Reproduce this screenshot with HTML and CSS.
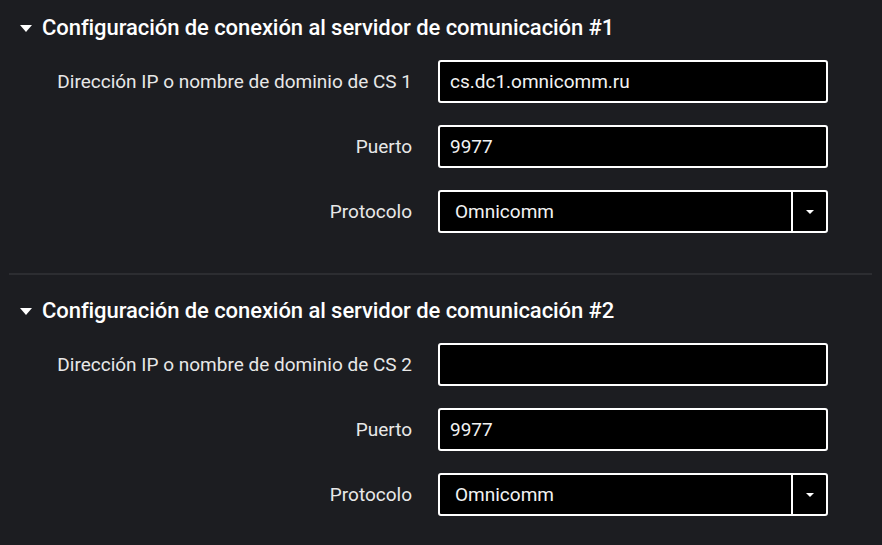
FILE: index.html
```html
<!DOCTYPE html>
<html lang="es">
<head>
<meta charset="utf-8">
<link rel="stylesheet" href="styles.css">
</head>
<body>
<div class="page">
  <section class="group">
    <h2 class="group-title"><span class="caret"></span><span>Configuración de conexión al servidor de comunicación #1</span></h2>
    <div class="form">
      <label class="label">Dirección IP o nombre de dominio de CS 1</label>
      <div class="field"><span class="value">cs.dc1.omnicomm.ru</span></div>
      <label class="label">Puerto</label>
      <div class="field"><span class="value">9977</span></div>
      <label class="label">Protocolo</label>
      <div class="field select"><span class="value">Omnicomm</span><span class="select-btn"><span class="select-arrow"></span></span></div>
    </div>
  </section>
  <hr class="divider">
  <section class="group">
    <h2 class="group-title"><span class="caret"></span><span>Configuración de conexión al servidor de comunicación #2</span></h2>
    <div class="form">
      <label class="label">Dirección IP o nombre de dominio de CS 2</label>
      <div class="field"><span class="value"></span></div>
      <label class="label">Puerto</label>
      <div class="field"><span class="value">9977</span></div>
      <label class="label">Protocolo</label>
      <div class="field select"><span class="value">Omnicomm</span><span class="select-btn"><span class="select-arrow"></span></span></div>
    </div>
  </section>
</div>
</body>
</html>
```
FILE: styles.css
```css
html, body {
  margin: 0;
  padding: 0;
  background: #1c1d21;
}
body {
  font-family: Roboto, "Liberation Sans", sans-serif;
  color: #e6e6e6;
}
.page {
  padding: 16px 10px 0 9px;
}
.group-title {
  margin: 0;
  height: 24px;
  line-height: 24px;
  font-size: 22px;
  font-weight: 500;
  letter-spacing: -0.07px;
  color: #ffffff;
  display: flex;
  align-items: center;
  padding-left: 11px;
}
.caret {
  width: 0;
  height: 0;
  border-left: 6.5px solid transparent;
  border-right: 6.5px solid transparent;
  border-top: 7px solid #ffffff;
  margin-right: 10px;
  margin-top: 1px;
}
.form {
  margin-top: 20px;
  display: grid;
  grid-template-columns: 403px 390px;
  column-gap: 26px;
  row-gap: 22px;
  align-items: center;
}
.label {
  text-align: right;
  font-size: 19px;
  color: #e8e8e8;
}
.field {
  height: 43px;
  box-sizing: border-box;
  border: 2px solid #ffffff;
  border-radius: 3px;
  background: #000000;
  display: flex;
  align-items: center;
}
.value {
  flex: 1;
  padding-left: 10px;
  font-size: 19px;
  color: #f2f2f2;
}
.select .value {
  padding-left: 15px;
}
.select-btn {
  width: 33px;
  align-self: stretch;
  border-left: 2px solid #ffffff;
  display: flex;
  align-items: center;
  justify-content: center;
}
.select-arrow {
  width: 0;
  height: 0;
  border-left: 4px solid transparent;
  border-right: 4px solid transparent;
  border-top: 4px solid #ffffff;
}
.divider {
  margin: 40px 0 24px 0;
  height: 2px;
  border: 0;
  background: #2c2d31;
}
```
